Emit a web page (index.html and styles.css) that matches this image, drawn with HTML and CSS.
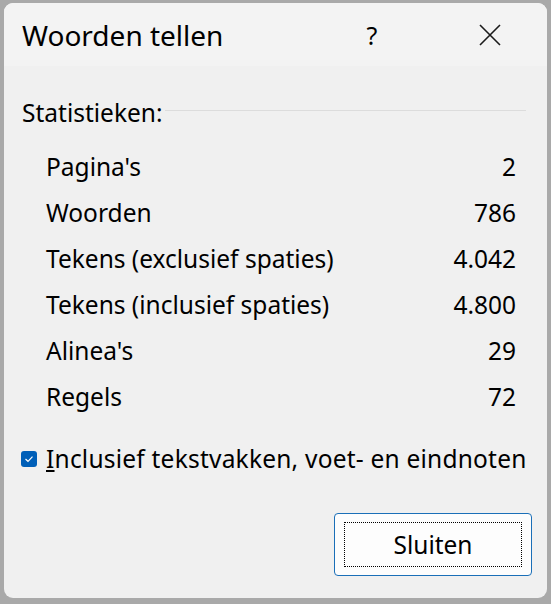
FILE: index.html
```html
<!DOCTYPE html>
<html>
<head>
<meta charset="utf-8">
<link rel="stylesheet" href="styles.css">
</head>
<body>
<div class="window">
  <div class="titlebar">
    <div class="title">Woorden tellen</div>
    <div class="help">?</div>
    <div class="close">
      <svg width="22" height="22" viewBox="0 0 22 22"><path d="M1 1 L21 21 M21 1 L1 21" stroke="#1a1a1a" stroke-width="1.6" fill="none"/></svg>
    </div>
  </div>
  <div class="content">
    <div class="group-head">
      <span class="group-label">Statistieken:</span>
      <span class="group-line"></span>
    </div>
    <div class="stats">
      <div class="row"><span>Pagina's</span><span>2</span></div>
      <div class="row"><span>Woorden</span><span>786</span></div>
      <div class="row"><span>Tekens (exclusief spaties)</span><span>4.042</span></div>
      <div class="row"><span>Tekens (inclusief spaties)</span><span>4.800</span></div>
      <div class="row"><span>Alinea's</span><span>29</span></div>
      <div class="row"><span>Regels</span><span>72</span></div>
    </div>
    <div class="check">
      <span class="box"><svg width="10" height="8" viewBox="0 0 10 8"><path d="M1.5 4 L4 6.3 L8.5 1.6" stroke="#fff" stroke-width="1.2" fill="none"/></svg></span>
      <span class="check-label"><u>I</u>nclusief tekstvakken, voet- en eindnoten</span>
    </div>
    <div class="footer">
      <button class="btn"><span class="focus">Sluiten</span></button>
    </div>
  </div>
</div>
</body>
</html>
```
FILE: styles.css
```css
html, body {
  margin: 0;
  padding: 0;
}
body {
  background: #a9a9a9;
  width: 551px;
  height: 604px;
  overflow: hidden;
  font-family: "Noto Sans", "Open Sans", sans-serif;
  color: #000;
}
.window {
  margin: 3px 0 0 4px;
  width: 543px;
  height: 595px;
  background: #f0f0f0;
  border-radius: 9px;
  overflow: hidden;
  box-sizing: border-box;
}
.titlebar {
  height: 63px;
  background: #f3f3f3;
  display: flex;
  align-items: center;
  box-sizing: border-box;
  padding-left: 18px;
}
.title {
  font-size: 28px;
  flex: 1;
}
.help {
  font-size: 25px;
  width: 30px;
  text-align: center;
  margin-right: 92px;
}
.close {
  width: 22px;
  height: 22px;
  margin-right: 46px;
  display: flex;
}
.content {
  padding: 28px 31px 0 18px;
}
.group-head {
  display: flex;
  align-items: center;
  height: 36px;
}
.group-label {
  font-size: 24.5px;
}
.group-line {
  flex: 1;
  height: 1px;
  background: #dcdcdc;
  margin-left: 2px;
  margin-right: -10px;
  margin-top: -4px;
}
.stats {
  padding: 13px 0 0 24px;
  display: flex;
  flex-direction: column;
}
.row {
  display: flex;
  justify-content: space-between;
  height: 46px;
  align-items: center;
  font-size: 24.5px;
}
.check {
  display: flex;
  align-items: center;
  margin-top: 23px;
  font-size: 24.5px;
  margin-left: -1px;
  white-space: nowrap;
  margin-right: -40px;
}
.check-label {
  letter-spacing: 0.22px;
}
.box {
  width: 16px;
  height: 16px;
  flex: none;
  background: #005fb8;
  border-radius: 3px;
  display: flex;
  align-items: center;
  justify-content: center;
  margin-right: 9px;
}
.footer {
  display: flex;
  justify-content: flex-end;
  margin-top: 38px;
  margin-right: -16px;
}
.btn {
  width: 198px;
  height: 63px;
  border: 1px solid #1a6fb8;
  border-radius: 4px;
  background: #fdfdfd;
  padding: 8px 9px;
  box-sizing: border-box;
  font-family: inherit;
  font-size: 24.5px;
  color: #000;
  display: flex;
}
.focus {
  flex: 1;
  border: 1px dotted #000;
  display: flex;
  align-items: center;
  justify-content: center;
}
```
